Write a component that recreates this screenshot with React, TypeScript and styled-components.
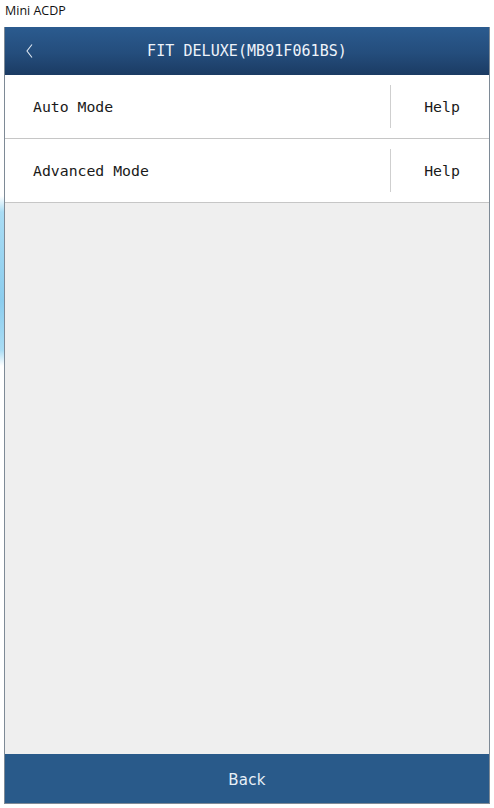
import React from "react";
import styled, { createGlobalStyle } from "styled-components";

const GlobalStyle = createGlobalStyle`
	html, body {
		margin: 0;
		padding: 0;
		background: #ffffff;
	}
	* {
		box-sizing: border-box;
	}
`;

const Screen = styled.div`
	height: 808px;
	display: flex;
	flex-direction: column;
	background-color: #ffffff;
	background-image: linear-gradient(
		to bottom,
		transparent 196px,
		#a9dcf4 212px,
		#8ccdee 300px,
		#a9dcf4 350px,
		transparent 366px
	);
	background-size: 4px 100%;
	background-repeat: no-repeat;
`;

const TitleBar = styled.div`
	height: 27px;
	padding-left: 5px;
	font-family: "Open Sans", "Noto Sans", sans-serif;
	font-size: 12.5px;
	line-height: 21px;
	color: #111;
`;

const Window = styled.div`
	flex: 1;
	margin: 0 4px 4px 4px;
	border: 1px solid #7e8a96;
	border-top: none;
	display: flex;
	flex-direction: column;
	background: #efefef;
`;

const Header = styled.div`
	height: 48px;
	display: flex;
	align-items: center;
	justify-content: center;
	position: relative;
	background: linear-gradient(to bottom, #2b5b8f 0%, #244d7c 55%, #1b3b63 100%);
	color: #eef3fa;
	font-family: "DejaVu Sans Mono", monospace;
	font-size: 15px;
	letter-spacing: 0.05px;
`;

const BackArrow = styled.button`
	position: absolute;
	left: 20px;
	top: 16px;
	width: 10px;
	height: 16px;
	padding: 0;
	border: none;
	background: none;
	display: flex;
`;

const ModeList = styled.div`
	display: flex;
	flex-direction: column;
`;

const ModeRow = styled.div`
	height: 64px;
	display: flex;
	align-items: center;
	background: #ffffff;
	border-bottom: 1px solid #c6c6c6;
	font-family: "DejaVu Sans Mono", monospace;
	font-size: 14.8px;
	color: #1a1a1a;
`;

const ModeName = styled.div`
	flex: 1;
	padding-left: 28px;
`;

const HelpCell = styled.div`
	width: 99px;
	height: 43px;
	display: flex;
	align-items: center;
	justify-content: center;
	padding-left: 4px;
	border-left: 1px solid #cfcfcf;
`;

const BackBar = styled.div`
	height: 49px;
	display: flex;
	align-items: center;
	justify-content: center;
	padding-top: 3px;
	background: #295a8a;
	color: #e8f0f8;
	font-family: "DejaVu Sans", sans-serif;
	font-size: 15px;
	letter-spacing: 0.3px;
	margin-top: auto;
`;

const modes = ["Auto Mode", "Advanced Mode"];

export default function App() {
	return (
		<>
			<GlobalStyle />
			<Screen>
				<TitleBar>Mini ACDP</TitleBar>
				<Window>
					<Header>
						<BackArrow aria-label="back">
							<svg width="10" height="16" viewBox="0 0 10 16">
								<polyline
									points="7,1.5 2,8 7,14.5"
									fill="none"
									stroke="#dfe8f2"
									strokeWidth="1.1"
								/>
							</svg>
						</BackArrow>
						FIT DELUXE(MB91F061BS)
					</Header>
					<ModeList>
						{modes.map((m) => (
							<ModeRow key={m}>
								<ModeName>{m}</ModeName>
								<HelpCell>Help</HelpCell>
							</ModeRow>
						))}
					</ModeList>
					<BackBar>Back</BackBar>
				</Window>
			</Screen>
		</>
	);
}
